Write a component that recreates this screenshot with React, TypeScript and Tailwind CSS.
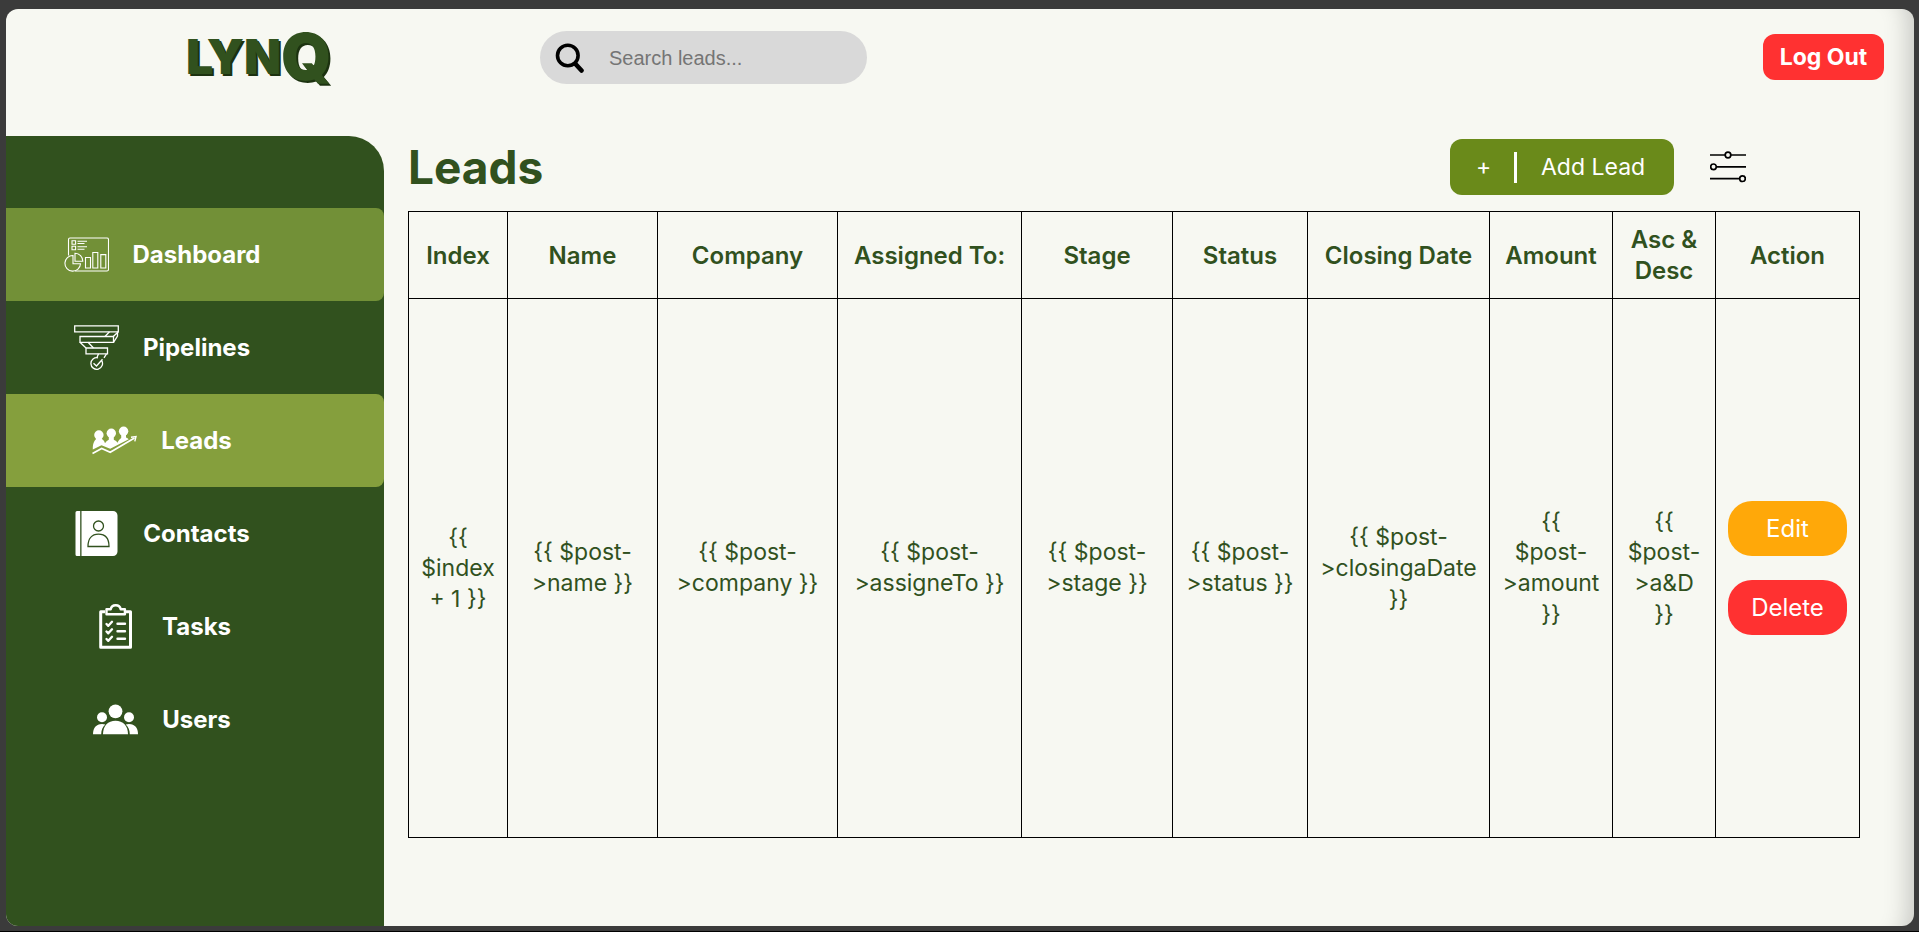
import type { ReactNode } from 'react'

const DashboardIcon = () => (
  <svg viewBox="0 0 45 45" className="size-[45px] shrink-0" fill="none" stroke="white" strokeWidth="1.1" aria-hidden="true">
    <path d="M4.500 23.500V7.500a1.500 1.500 0 0 1 1.500-1.500h37a1.500 1.500 0 0 1 1.500 1.500v30a1.500 1.500 0 0 1-1.500 1.500H11" />
    <path d="M8 8.700h3.600v3.600H8zM8 14.200h3.600v3.600H8z" />
    <path d="M13.500 9.200h9.500M13.500 11.500h7M13.500 14.800h9.500M13.500 17.200h7" />
    <path d="M9 23.500a7.800 7.800 0 1 0 7.500 8.200H9z" />
    <path d="M11 21.200v8.100h7.800a8 8 0 0 0-7.800-8.100z" />
    <path d="M21.500 25.500h5V36h-5zM28.800 20.500h5V36h-5zM36.800 22.600h5V36h-5z" />
  </svg>
)

const PipelineIcon = () => (
  <svg viewBox="0 0 45 45" className="size-[45px] shrink-0" fill="none" stroke="white" strokeWidth="1.300" aria-hidden="true">
    <path d="M.7.8h43.600v6H.7zM6 11.500h33.500v5.800H6zM12 23h21.500v5.800H12z" />
    <path d="M44.300 6.800l-5 4.700M35.500 6.800l-4.500 4.700M43.500 7.500v3.500l-4 6.300M6 17.300l6 5.700M14 17.300l5.500 5.700" />
    <path d="M24.500 28.800L23 32.500M32.500 28.800l-2.500 4" />
    <path d="M27.700 35.500a5.800 5.800 0 1 1-3.700-2.700M19.500 38.200l3 2.800 6-6.800" />
  </svg>
)

const LeadsIcon = () => (
  <svg viewBox="0 0 45 45" className="size-[45px] shrink-0" fill="white" aria-hidden="true">
    <circle cx="6.900" cy="17" r="4.700" />
    <circle cx="19.300" cy="15.200" r="4.700" />
    <circle cx="31.600" cy="13.300" r="4.700" />
    <path d="M.8 31.500c0-5 .7-8 3.700-11h4.800c1.800 1.200 3.200 2.800 3.700 4.800 1-1.600 2-2.600 3.800-3.600v-3h5v3c2 .8 3 1.800 3.700 3 1-2.200 2-3.500 3.700-4.700v-3h4.800v2.500c1.200.5 2 1 2.700 1.800L18.200 30.800 9.500 27.300z" />
    <path d="M.5 35.500l9.200-5 8.500 3.700L42.500 20" fill="none" stroke="white" strokeWidth="1.700" />
    <path d="M39 19.300l5-.7-1.200 4.800" fill="none" stroke="white" strokeWidth="1.400" />
  </svg>
)

const ContactsIcon = () => (
  <svg viewBox="0 0 45 45" className="size-[45px] shrink-0" fill="white" aria-hidden="true">
    <path d="M3 0h3.200v45H3a1.500 1.500 0 0 1-1.500-1.500v-42A1.500 1.500 0 0 1 3 0zM7.500 0h31.500a4.500 4.500 0 0 1 4.500 4.500v36A4.500 4.500 0 0 1 39 45H7.500z" />
    <g fill="none" stroke="#31511e" strokeWidth="1.300">
      <circle cx="24.500" cy="15" r="5" />
      <path d="M14 35.500c0-8 3.800-12.300 10.500-12.300S35 27.500 35 35.500z" />
    </g>
  </svg>
)

const TasksIcon = () => (
  <svg viewBox="0 0 45 45" className="size-[45px] shrink-0" fill="none" stroke="white" strokeLinejoin="round" aria-hidden="true">
    <path d="M12 7.800H7.700v35.500h29.800V7.800H33" strokeWidth="3" />
    <path d="M13.500 5.300h4.200c.5-2.600 2.300-4 5-4s4.500 1.400 5 4h4.200v5h-18.400z" strokeWidth="2.400" />
    <g strokeWidth="2.400" strokeLinecap="round">
      <path d="M13.500 20l1.800 1.800 3.700-4M13.500 27.500l1.800 1.800 3.700-4M13.500 35l1.800 1.800 3.700-4M24.500 19.800h7.500M24.500 27.300h7.500M24.500 34.800h7.500" />
    </g>
  </svg>
)

const UsersIcon = () => (
  <svg viewBox="0 0 45 45" className="size-[45px] shrink-0" fill="white" aria-hidden="true">
    <circle cx="22.500" cy="14.300" r="6.900" />
    <circle cx="9" cy="20.200" r="5" />
    <circle cx="36" cy="20.200" r="5" />
    <path d="M10 37.200c0-8.500 5-13.500 12.500-13.500S35 28.700 35 37.200z" />
    <path d="M0 37.200c0-6 3-10.200 9-10.200 1.300 0 2.300.2 3.300.6-2.800 2.400-4 5.600-4.100 9.600zM45 37.200c0-6-3-10.200-9-10.200-1.300 0-2.300.2-3.300.6 2.800 2.400 4 5.600 4.100 9.600z" />
  </svg>
)

const navItems: { label: string; icon: ReactNode; tone: string }[] = [
  { label: 'Dashboard', icon: <DashboardIcon />, tone: 'bg-[#729037]' },
  { label: 'Pipelines', icon: <PipelineIcon />, tone: '' },
  { label: 'Leads', icon: <LeadsIcon />, tone: 'bg-[#859f3d]' },
  { label: 'Contacts', icon: <ContactsIcon />, tone: '' },
  { label: 'Tasks', icon: <TasksIcon />, tone: '' },
  { label: 'Users', icon: <UsersIcon />, tone: '' },
]

const columns = [
  { title: 'Index', value: '{{ $index + 1 }}', width: 'w-[99px]' },
  { title: 'Name', value: '{{ $post->name }}', width: 'w-[150px]' },
  { title: 'Company', value: '{{ $post->company }}', width: 'w-[180px]' },
  { title: 'Assigned To:', value: '{{ $post->assigneTo }}', width: 'w-[184px]' },
  { title: 'Stage', value: '{{ $post->stage }}', width: 'w-[151px]' },
  { title: 'Status', value: '{{ $post->status }}', width: 'w-[135px]' },
  { title: 'Closing Date', value: '{{ $post->closingaDate }}', width: 'w-[182px]' },
  { title: 'Amount', value: '{{ $post->amount }}', width: 'w-[123px]' },
  { title: 'Asc & Desc', value: '{{ $post->a&D }}', width: 'w-[103px]' },
]

function Header() {
  return (
    <header className="flex h-[127px] items-start pr-[30px]">
      <div className="flex w-[534px] shrink-0 items-center pt-[18px] pl-[180px] font-black text-[#31511e] [text-shadow:2px_2px_0_#1c3210]">
        <span className="text-[48px] leading-[60px]">LYN</span>
        <span className="text-[64px] leading-[60px]">Q</span>
      </div>
      <label className="mt-[22px] flex h-[53px] w-[327px] items-center rounded-full bg-[#d9d9d9] pl-[15px]">
        <svg viewBox="0 0 30 30" className="size-[30px] shrink-0" fill="none" stroke="black" strokeLinecap="round" aria-hidden="true">
          <circle cx="12.800" cy="12.500" r="10.300" strokeWidth="3.600" />
          <path d="M20.500 21l6 6.500" strokeWidth="4.600" />
        </svg>
        <input
          type="search"
          aria-label="Search leads"
          placeholder="Search leads..."
          className="ml-6 w-full min-w-0 bg-transparent font-['Liberation_Sans',Arial,sans-serif] text-xl outline-none placeholder:text-[#757575]"
        />
      </label>
      <button type="button" className="mt-[25px] ml-auto h-[46px] w-[121px] rounded-xl bg-[#ff3131] text-[23px] font-bold text-white">
        Log Out
      </button>
    </header>
  )
}

function Sidebar() {
  return (
    <nav className="w-[378px] shrink-0 rounded-tr-[35px] bg-[#31511e] pt-[72px]">
      {navItems.map((item) => (
        <a
          key={item.label}
          href={`#${item.label.toLowerCase()}`}
          className={`flex h-[93px] items-center justify-center gap-6 rounded-r-lg pr-[66px] text-2xl font-bold text-white ${item.tone}`}
        >
          {item.icon}
          {item.label}
        </a>
      ))}
    </nav>
  )
}

function LeadsTable() {
  return (
    <table className="w-full table-fixed border-collapse text-center text-[23px] leading-[31px] text-[#31511e]">
      <colgroup>
        {columns.map((c) => (
          <col key={c.title} className={c.width} />
        ))}
        <col className="w-[144px]" />
      </colgroup>
      <thead>
        <tr className="h-[87px] text-2xl leading-[31px]">
          {columns.map((c) => (
            <th key={c.title} scope="col" className="border border-black px-3 font-semibold">
              {c.title}
            </th>
          ))}
          <th scope="col" className="border border-black px-3 font-semibold">Action</th>
        </tr>
      </thead>
      <tbody>
        <tr className="h-[539px]">
          {columns.map((c) => (
            <td key={c.title} className="border border-black px-3">
              {c.value}
            </td>
          ))}
          <td className="border border-black px-3">
            <div className="flex flex-col gap-6 text-2xl text-white">
              <button type="button" className="h-[55px] rounded-3xl bg-[#ffa809]">Edit</button>
              <button type="button" className="h-[55px] rounded-3xl bg-[#ff3131]">Delete</button>
            </div>
          </td>
        </tr>
      </tbody>
    </table>
  )
}

export default function App() {
  return (
    <div className="flex min-h-screen flex-col border-b border-black bg-[#3b3b3b] px-[6px] pt-[9px] pb-[5px] font-['Inter',sans-serif]">
      <div className="mr-[-1px] flex grow flex-col overflow-hidden rounded-xl bg-[#f7f8f2] shadow-[inset_-30px_0_24px_-24px_rgba(0,0,0,0.2)]">
        <Header />
        <div className="flex grow">
          <Sidebar />
          <main className="min-w-0 grow pr-[54px] pl-6">
            <div className="flex h-[75px] items-start pt-[3px] pr-[114px]">
              <h1 className="text-[46px] leading-[56px] font-bold text-[#31511e]">Leads</h1>
              <button
                type="button"
                className="ml-auto flex h-14 w-[224px] items-center rounded-xl bg-[#6a8a1a] pl-[26px] text-[23px] text-white"
              >
                <span className="w-[38px] text-left">+</span>
                <span className="h-[31px] w-[3px] bg-white" />
                <span className="pl-6">Add Lead</span>
              </button>
              <button type="button" aria-label="Filter leads" className="mt-[10px] ml-9">
                <svg viewBox="0 0 36 36" className="size-9" fill="none" stroke="black" strokeWidth="1.700" aria-hidden="true">
                  <path d="M0 6h15M21 6h15M6.500 17.800H36M0 29.700h29.500" />
                  <circle cx="18" cy="6" r="2.800" />
                  <circle cx="3.500" cy="17.800" r="2.800" />
                  <circle cx="32.500" cy="29.700" r="2.800" />
                </svg>
              </button>
            </div>
            <LeadsTable />
          </main>
        </div>
      </div>
    </div>
  )
}
